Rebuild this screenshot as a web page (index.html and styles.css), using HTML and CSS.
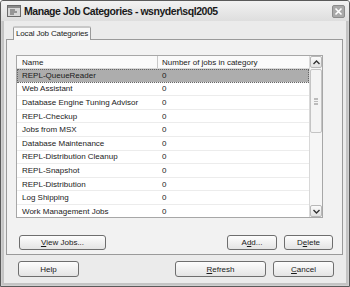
FILE: index.html
```html
<!DOCTYPE html>
<html>
<head>
<meta charset="utf-8">
<link rel="stylesheet" href="styles.css">
</head>
<body>
<div class="window">
  <div class="titlebar">
    <svg class="appicon" width="14" height="12" viewBox="0 0 14 12">
      <rect x="0.5" y="0.5" width="13" height="11" fill="#d8d8d8" stroke="#6a6a6a"/>
      <rect x="1" y="1" width="12" height="2" fill="#8a8a8a"/>
      <path d="M3 5h5M3 7h7M3 9h4" stroke="#555" stroke-width="1"/>
    </svg>
    <span class="title">Manage Job Categories - wsnyder\sql2005</span>
    <span class="close"><svg width="9" height="9" viewBox="0 0 9 9"><path d="M1.5 1.5l6 6M7.5 1.5l-6 6" stroke="#fff" stroke-width="1.6"/></svg></span>
  </div>
  <div class="content">
    <div class="tabs"><div class="tab">Local Job Categories</div></div>
    <div class="panel">
      <div class="grid">
        <div class="list">
          <div class="hdr"><div class="c1">Name</div><div class="c2">Number of jobs in category</div></div>
          <div class="row sel"><div class="c1">REPL-QueueReader</div><div class="c2">0</div></div>
          <div class="row"><div class="c1">Web Assistant</div><div class="c2">0</div></div>
          <div class="row"><div class="c1">Database Engine Tuning Advisor</div><div class="c2">0</div></div>
          <div class="row"><div class="c1">REPL-Checkup</div><div class="c2">0</div></div>
          <div class="row"><div class="c1">Jobs from MSX</div><div class="c2">0</div></div>
          <div class="row"><div class="c1">Database Maintenance</div><div class="c2">0</div></div>
          <div class="row"><div class="c1">REPL-Distribution Cleanup</div><div class="c2">0</div></div>
          <div class="row"><div class="c1">REPL-Snapshot</div><div class="c2">0</div></div>
          <div class="row"><div class="c1">REPL-Distribution</div><div class="c2">0</div></div>
          <div class="row"><div class="c1">Log Shipping</div><div class="c2">0</div></div>
          <div class="row last"><div class="c1">Work Management Jobs</div><div class="c2">0</div></div>
        </div>
        <div class="vscroll">
          <div class="sbtn"><svg width="7" height="5" viewBox="0 0 7 5"><path d="M0.5 4L3.5 1L6.5 4" fill="none" stroke="#333" stroke-width="1.4"/></svg></div>
          <div class="track">
            <div class="thumb"><span class="grip"></span></div>
          </div>
          <div class="sbtn"><svg width="7" height="5" viewBox="0 0 7 5"><path d="M0.5 1L3.5 4L6.5 1" fill="none" stroke="#333" stroke-width="1.4"/></svg></div>
        </div>
      </div>
      <div class="panelbtns">
        <div class="btn viewjobs"><u>V</u>iew Jobs...</div>
        <div class="spacer"></div>
        <div class="btn add">A<u>d</u>d...</div>
        <div class="btn del">D<u>e</u>lete</div>
      </div>
    </div>
    <div class="footer">
      <div class="btn help">Help</div>
      <div class="spacer"></div>
      <div class="btn refresh"><u>R</u>efresh</div>
      <div class="btn cancel"><u>C</u>ancel</div>
    </div>
  </div>
</div>
</body>
</html>
```
FILE: styles.css
```css
html, body { margin: 0; padding: 0; background: #fff; }
body { width: 350px; height: 287px; overflow: hidden; font-family: "Liberation Sans", Arial, sans-serif; font-size: 8px; color: #111; }

.window {
  box-sizing: border-box;
  width: 350px; height: 287px;
  border: 1px solid #5a5a5a;
  border-radius: 3px 3px 0 0;
  background: #ebebeb;
  box-shadow: inset 0 0 0 1px #d0d0d0, inset 0 0 0 3px #c4c4c4;
  display: flex; flex-direction: column;
}

.titlebar {
  height: 20px;
  display: flex; align-items: center;
  padding: 0 4px 0 6px;
  background: linear-gradient(#f2f2f2, #dedede);
  border-radius: 2px 2px 0 0;
}
.appicon { flex: none; margin-right: 3px; }
.title { font-weight: bold; font-size: 10.5px; color: #1a1a1a; letter-spacing: -0.45px; flex: 1; }
.close {
  width: 11px; height: 11px;
  background: #a9a9a9;
  border: 1px solid #8c8c8c;
  border-radius: 2px;
  display: flex; align-items: center; justify-content: center;
}

.content { flex: 1; padding: 5px 6px 0 5px; display: flex; flex-direction: column; }

.tabs { display: flex; padding-left: 7px; height: 13px; position: relative; z-index: 1; }
.tab {
  border: 1px solid #9a9a9a; border-bottom: none;
  border-top: 2px solid #c8c8c8;
  background: #f8f8f8;
  padding: 0 2px; line-height: 11px; height: 12px;
  border-radius: 2px 2px 0 0;
  color: #222;
  font-size: 8px;
  letter-spacing: -0.15px;
}

.panel {
  border: 1px solid #9a9a9a;
  background: #f2f2f2;
  height: 216px; box-sizing: border-box;
  padding: 15px 19px 0 9px;
  display: flex; flex-direction: column;
}

.grid {
  height: 163px; box-sizing: border-box;
  border: 1px solid #a7a7a7;
  background: #fff;
  display: flex;
}
.list { flex: 1; overflow: hidden; }
.hdr, .row { display: flex; align-items: center; }
.hdr { height: 12px; border-bottom: 1px solid #d8d8d8; background: #fafafa; color: #222; }
.hdr .c1 { border-right: 1px solid #c8c8c8; }
.c1 { width: 141px; padding-left: 5px; box-sizing: border-box; flex: none; height: 100%; display: flex; align-items: center; }
.c2 { padding-left: 4px; }
.row { height: 13.6px; box-sizing: border-box; border-bottom: 1px solid #ececec; color: #1a1a1a; }
.row.sel { background: #adadad; outline: 1px dotted #666; outline-offset: -1px; }
.row.last { border-bottom: none; }

.vscroll {
  width: 12px; flex: none;
  border-left: 1px solid #d8d8d8;
  background: #f6f6f6;
  display: flex; flex-direction: column;
}
.sbtn {
  height: 12px; box-sizing: border-box;
  border: 1px solid #b8b8b8; border-radius: 2px;
  background: linear-gradient(#fbfbfb, #e2e2e2);
  display: flex; align-items: center; justify-content: center;
}
.track { flex: 1; padding-top: 1px; }
.thumb {
  height: 64px; box-sizing: border-box;
  border: 1px solid #c4c4c4; border-radius: 2px;
  background: #f4f4f4;
  display: flex; align-items: center; justify-content: center;
}
.grip { width: 4px; height: 5px; border-top: 1px solid #bbb; border-bottom: 1px solid #bbb; background: repeating-linear-gradient(#bbb 0 1px, transparent 1px 2px); }

.panelbtns { display: flex; margin-top: 17px; padding-left: 3px; }
.spacer { flex: 1; }

.btn {
  box-sizing: border-box;
  height: 15px;
  border: 1px solid #6e6e6e;
  border-radius: 3px;
  background: linear-gradient(#fdfdfd, #e4e4e4);
  display: flex; align-items: center; justify-content: center;
  color: #1a1a1a;
  font-size: 8px;
}
.viewjobs { width: 87px; }
.add { width: 50px; margin-right: 7px; }
.del { width: 49px; margin-right: -10px; }

.footer { display: flex; margin-top: 6px; padding-left: 12px; }
.footer .btn { height: 16px; }
.help { width: 61px; }
.refresh { width: 91px; margin-right: 7px; }
.cancel { width: 61px; margin-right: 9px; }
```
